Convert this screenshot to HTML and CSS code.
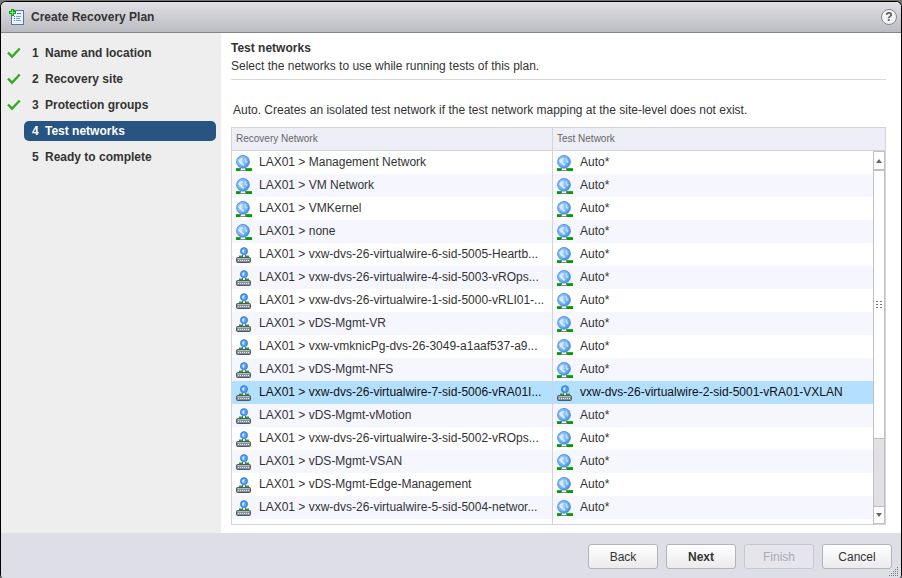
FILE: index.html
```html
<!DOCTYPE html>
<html lang="en">
<head>
<meta charset="utf-8">
<title>Create Recovery Plan</title>
<link rel="stylesheet" href="styles.css">
</head>
<body>
<svg class="defs" aria-hidden="true">
  <defs>
    <radialGradient id="ball" cx="0.4" cy="0.4" r="0.65">
      <stop offset="0" stop-color="#a9d3ff"/>
      <stop offset="0.6" stop-color="#74b4f8"/>
      <stop offset="1" stop-color="#3b86e0"/>
    </radialGradient>
    <symbol id="globe" viewBox="0 0 16 16">
      <path d="M0 13h16v3H0z" fill="#0a9a08"/>
      <path d="M0 13h16v1H0z" fill="#14b812"/>
      <path d="M4 14h6v2H4z" fill="#888"/>
      <path d="M5 13h4v2H5z" fill="#fff"/>
      <circle cx="7" cy="6.800" r="6.400" fill="url(#ball)" stroke="#4a88d8" stroke-width="0.8"/>
      <path d="M2 6l2-2.500 2.500-.5v1.500L5 6l1.500 1L6 8l2 1-.5 2-1.500-1L3.500 8z" fill="#d9ebff"/>
      <path d="M8.500 3l2 1-1 1.200 2 1-.5 2-2-1.500z" fill="#c4e0ff"/>
    </symbol>
    <symbol id="switch" viewBox="0 0 16 16">
      <path d="M3 8.500h3v2H3zM10 8.500h3v2h-3z" fill="#14b010"/>
      <path d="M6 8h4v2H6z" fill="#666"/>
      <path d="M7 8h2v2H7z" fill="#eee"/>
      <circle cx="8" cy="4.200" r="3.600" fill="#4b9bf5" stroke="#2f72cc" stroke-width="0.7"/>
      <path d="M6 3.500l2-1.500.8 1-1 1 .8 1-1 1-1.200-1z" fill="#d8ebff"/>
      <rect x="0.500" y="10.500" width="14" height="5" rx="1" fill="#86909a" stroke="#4f5963"/>
      <path d="M2 13.500h11" stroke="#e8edf2" stroke-dasharray="1 1"/>
      <path d="M1.500 11.500h12" stroke="#b3bcc4"/>
    </symbol>
    <symbol id="check" viewBox="0 0 14 12">
      <path d="M1 5.500l4 4.200L12.700 1.500" fill="none" stroke="#32ac1f" stroke-width="2.400"/>
    </symbol>
  </defs>
</svg>
<main class="dialog">
  <header class="titlebar">
    <svg class="plan-icon" viewBox="0 0 16 16" aria-hidden="true">
      <rect x="2.500" y="1.500" width="12" height="14" fill="#eaf2fb" stroke="#54779f"/>
      <path d="M5 7.500h1M5 9.500h1M5 11.500h1M8 4.500h4" stroke="#507fb8"/>
      <path d="M7 7.500h5M7 9.500h4M7 11.500h5" stroke="#7f9fc4"/>
      <path d="M3.500 0v7M0 3.500h7" stroke="#1d9a1a" stroke-width="3"/>
      <path d="M3.500 1v5M1 3.500h5" stroke="#7df06b"/>
    </svg>
    <h1>Create Recovery Plan</h1>
    <button class="help" type="button" aria-label="Help">?</button>
  </header>
  <div class="body">
    <nav class="steps">
      <ol>
        <li><svg><use href="#check"/></svg><a href="#"><span>1</span>Name and location</a></li>
        <li><svg><use href="#check"/></svg><a href="#"><span>2</span>Recovery site</a></li>
        <li><svg><use href="#check"/></svg><a href="#"><span>3</span>Protection groups</a></li>
        <li><a href="#" class="current" aria-current="step"><span>4</span>Test networks</a></li>
        <li><a href="#"><span>5</span>Ready to complete</a></li>
      </ol>
    </nav>
    <section class="page">
      <div class="intro">
        <h2>Test networks</h2>
        <p>Select the networks to use while running tests of this plan.</p>
      </div>
      <p class="note">Auto. Creates an isolated test network if the test network mapping at the site-level does not exist.</p>
      <div class="grid">
        <table>
          <thead>
            <tr><th class="first">Recovery Network</th><th>Test Network</th></tr>
          </thead>
          <tbody>
            <tr><td><svg><use href="#globe"/></svg>LAX01 &gt; Management Network</td><td><svg><use href="#globe"/></svg>Auto*</td></tr>
            <tr><td><svg><use href="#globe"/></svg>LAX01 &gt; VM Network</td><td><svg><use href="#globe"/></svg>Auto*</td></tr>
            <tr><td><svg><use href="#globe"/></svg>LAX01 &gt; VMKernel</td><td><svg><use href="#globe"/></svg>Auto*</td></tr>
            <tr><td><svg><use href="#globe"/></svg>LAX01 &gt; none</td><td><svg><use href="#globe"/></svg>Auto*</td></tr>
            <tr><td><svg><use href="#switch"/></svg>LAX01 &gt; vxw-dvs-26-virtualwire-6-sid-5005-Heartb...</td><td><svg><use href="#globe"/></svg>Auto*</td></tr>
            <tr><td><svg><use href="#switch"/></svg>LAX01 &gt; vxw-dvs-26-virtualwire-4-sid-5003-vROps...</td><td><svg><use href="#globe"/></svg>Auto*</td></tr>
            <tr><td><svg><use href="#switch"/></svg>LAX01 &gt; vxw-dvs-26-virtualwire-1-sid-5000-vRLI01-...</td><td><svg><use href="#globe"/></svg>Auto*</td></tr>
            <tr><td><svg><use href="#switch"/></svg>LAX01 &gt; vDS-Mgmt-VR</td><td><svg><use href="#globe"/></svg>Auto*</td></tr>
            <tr><td><svg><use href="#switch"/></svg>LAX01 &gt; vxw-vmknicPg-dvs-26-3049-a1aaf537-a9...</td><td><svg><use href="#globe"/></svg>Auto*</td></tr>
            <tr><td><svg><use href="#switch"/></svg>LAX01 &gt; vDS-Mgmt-NFS</td><td><svg><use href="#globe"/></svg>Auto*</td></tr>
            <tr class="selected"><td><svg><use href="#switch"/></svg>LAX01 &gt; vxw-dvs-26-virtualwire-7-sid-5006-vRA01I...</td><td><svg><use href="#switch"/></svg>vxw-dvs-26-virtualwire-2-sid-5001-vRA01-VXLAN</td></tr>
            <tr><td><svg><use href="#switch"/></svg>LAX01 &gt; vDS-Mgmt-vMotion</td><td><svg><use href="#globe"/></svg>Auto*</td></tr>
            <tr><td><svg><use href="#switch"/></svg>LAX01 &gt; vxw-dvs-26-virtualwire-3-sid-5002-vROps...</td><td><svg><use href="#globe"/></svg>Auto*</td></tr>
            <tr><td><svg><use href="#switch"/></svg>LAX01 &gt; vDS-Mgmt-VSAN</td><td><svg><use href="#globe"/></svg>Auto*</td></tr>
            <tr><td><svg><use href="#switch"/></svg>LAX01 &gt; vDS-Mgmt-Edge-Management</td><td><svg><use href="#globe"/></svg>Auto*</td></tr>
            <tr><td><svg><use href="#switch"/></svg>LAX01 &gt; vxw-dvs-26-virtualwire-5-sid-5004-networ...</td><td><svg><use href="#globe"/></svg>Auto*</td></tr>
            <tr class="filler"><td></td><td></td></tr>
          </tbody>
        </table>
        <div class="scrollbar">
          <button type="button" aria-label="Scroll up"><svg viewBox="0 0 6 4"><path d="M0 4l3-4 3 4z"/></svg></button>
          <div class="track"><div class="thumb"><svg viewBox="0 0 6 7"><path d="M0 0h2v1H0zM4 0h2v1H4zM0 3h2v1H0zM4 3h2v1H4zM0 6h2v1H0zM4 6h2v1H4z"/></svg></div></div>
          <button type="button" aria-label="Scroll down"><svg viewBox="0 0 6 4"><path d="M0 0l3 4 3-4z"/></svg></button>
        </div>
      </div>
    </section>
  </div>
  <footer class="actions">
    <button type="button">Back</button>
    <button type="button" class="primary">Next</button>
    <button type="button" disabled>Finish</button>
    <button type="button">Cancel</button>
    <svg class="grip" viewBox="0 0 10 10" aria-hidden="true"><path d="M8 0h1v1H8zM6 2h1v1H6zM8 2h1v1H8zM4 4h1v1H4zM6 4h1v1H6zM8 4h1v1H8zM2 6h1v1H2zM4 6h1v1H4zM6 6h1v1H6zM8 6h1v1H8zM0 8h1v1H0zM2 8h1v1H2zM4 8h1v1H4zM6 8h1v1H6zM8 8h1v1H8z"/></svg>
  </footer>
</main>
</body>
</html>
```
FILE: styles.css
```css
* {
  box-sizing: border-box;
}

body {
  margin: 0;
  padding-top: 1px;
  min-height: 100vh;
  display: flex;
  flex-direction: column;
  background: #74766f;
  color: #333;
  font: 12px/16px "Liberation Sans", Arial, sans-serif;
}

h1,
h2,
p,
ol {
  margin: 0;
  padding: 0;
  font-size: 12px;
}

button {
  font: inherit;
  padding: 0;
}

.defs {
  position: absolute;
  width: 0;
  height: 0;
}

.dialog {
  flex: 1;
  display: flex;
  flex-direction: column;
  border: 1px solid #000;
  border-bottom: 0;
  border-radius: 6px 6px 4px 4px;
  overflow: hidden;
  background: #fff;
}

.titlebar {
  display: flex;
  align-items: center;
  height: 31px;
  padding: 0 4px 0 8px;
  background: linear-gradient(#e0e0e5, #bbbbc2);
  border-bottom: 1px solid #858589;
}

.plan-icon {
  width: 16px;
  height: 16px;
  margin-right: 6px;
}

.help {
  width: 16px;
  height: 16px;
  margin-left: auto;
  border: 1px solid #88888c;
  border-radius: 50%;
  background: #f4f4f6;
  color: #555;
  font-weight: bold;
  line-height: 14px;
}

.body {
  flex: 1;
  display: flex;
}

.steps {
  width: 220px;
  padding: 10px 5px 0 6px;
  background: #eee;
}

.steps ol {
  display: grid;
  gap: 6px;
  list-style: none;
}

.steps li {
  display: flex;
  align-items: center;
  justify-content: flex-end;
}

.steps li svg {
  width: 14px;
  height: 12px;
  margin-right: 3px;
}

.steps a {
  width: 192px;
  padding: 2px 8px;
  border-radius: 5px;
  color: #333;
  font-weight: bold;
  text-decoration: none;
}

.steps span {
  display: inline-block;
  width: 13px;
}

.steps .current {
  background: #285481;
  color: #fff;
}

.page {
  flex: 1;
  min-width: 0;
  padding: 7px 15px 8px 10px;
}

.intro {
  padding-bottom: 3px;
  border-bottom: 1px solid #d8d8d8;
}

.intro p {
  line-height: 20px;
}

.note {
  padding: 22px 2px 9px;
}

.grid {
  position: relative;
  border: 1px solid #d4d4d8;
}

table {
  width: 100%;
  table-layout: fixed;
  border-collapse: separate;
  border-spacing: 0;
}

th {
  height: 23px;
  padding: 0 4px;
  background: #eeeef6;
  border-bottom: 1px solid #d4d4d8;
  color: #666;
  font-size: 10px;
  font-weight: normal;
  text-align: left;
}

.first {
  width: 49%;
}

th + th,
td + td {
  border-left: 1px solid #d4d4d8;
}

td {
  height: 23px;
  padding: 0 4px;
  overflow: hidden;
  line-height: 23px;
  white-space: nowrap;
}

tbody tr:nth-child(even) {
  background: #f6f6fe;
}

tbody .selected {
  background: #b4e0ff;
  color: #111;
}

.filler td {
  height: 5px;
}

td svg {
  width: 16px;
  height: 16px;
  margin: 4px 7px 0 0;
  vertical-align: top;
}

.scrollbar {
  position: absolute;
  top: 23px;
  right: 0;
  bottom: 0;
  width: 12px;
  display: flex;
  flex-direction: column;
  background: #e2e0e2;
  border: 1px solid #c0c0c4;
}

.scrollbar button {
  display: grid;
  place-items: center;
  height: 17px;
  border: 0;
  background: #fff;
}

.scrollbar button svg {
  width: 6px;
  height: 4px;
  fill: #666;
}

.track {
  flex: 1;
}

.thumb {
  display: grid;
  place-items: center;
  height: 80%;
  background: #fff;
  border: solid #c0c0c4;
  border-width: 2px 0 1px;
}

.thumb svg {
  width: 6px;
  height: 7px;
  fill: #777;
}

.scrollbar .track + button {
  border-top: 1px solid #c0c0c4;
}

.actions {
  position: relative;
  display: flex;
  justify-content: flex-end;
  gap: 8px;
  padding: 11px 9px 9px;
  background: #dedee7;
}

.actions button {
  width: 70px;
  height: 25px;
  border: 1px solid #b0b5b9;
  border-radius: 3px;
  background: linear-gradient(#fff, #eceaec);
  color: #333;
}

.actions .primary {
  font-weight: bold;
}

.actions button:disabled {
  border-color: #c6cad0;
  background: #e5e5eb;
  color: #a8adb2;
}

.grip {
  position: absolute;
  right: 2px;
  bottom: 1px;
  width: 10px;
  height: 10px;
  fill: #77777d;
}
```
